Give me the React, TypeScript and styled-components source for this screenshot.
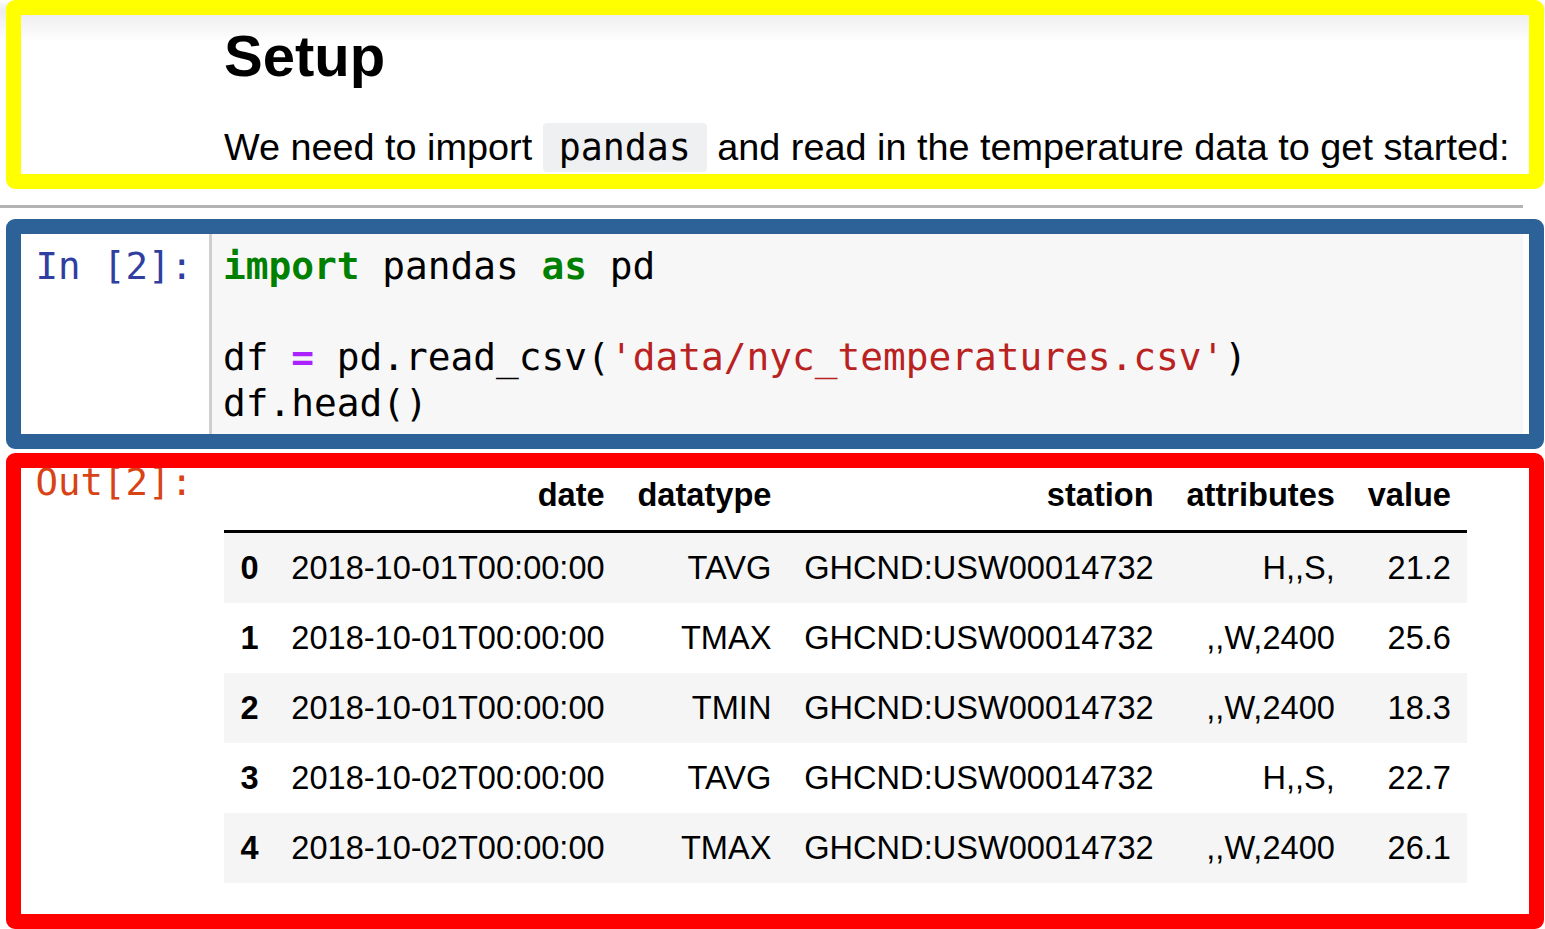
import React from "react";
import styled, { createGlobalStyle } from "styled-components";

const GlobalStyle = createGlobalStyle`
  html, body {
    margin: 0;
    padding: 0;
    background: #ffffff;
  }
  body {
    font-family: "Liberation Sans", Arial, sans-serif;
    color: #000;
  }
`;

const MONO = `"DejaVu Sans Mono", "Liberation Mono", monospace`;

const Page = styled.main`
  width: 1545px;
  height: 929px;
  overflow: hidden;
  background: linear-gradient(to bottom, #ffffff 0px, #ececec 10px, #ffffff 42px) no-repeat;
  background-size: 100% 42px;
`;

const Frame = styled.section<{ $color: string }>`
  box-sizing: border-box;
  margin-left: 6px;
  width: 1538px;
  border: 15px solid ${(p) => p.$color};
  border-radius: 9px;
`;

const MarkdownFrame = styled(Frame)`
  height: 189px;
  padding: 12px 0 0 203px;
  overflow: hidden;
`;

const Heading = styled.h2`
  margin: 0;
  font-size: 58px;
  line-height: 58px;
  font-weight: bold;
`;

const Paragraph = styled.p`
  margin: 38px 0 0 0;
  font-size: 37.8px;
  line-height: 48px;
  white-space: nowrap;
`;

const InlineCode = styled.code`
  font-family: ${MONO};
  font-size: 36.6px;
  background: #eff0f1;
  padding: 3px 16px;
  border-radius: 4px;
`;

const Divider = styled.hr`
  margin: 16px 0 11px 0;
  width: 1523px;
  height: 3px;
  border: none;
  background: #b3b3b3;
`;

const CodeFrame = styled(Frame)`
  height: 230px;
  display: flex;
  overflow: hidden;
`;

const Prompt = styled.div<{ $color: string }>`
  box-sizing: border-box;
  width: 188px;
  flex: none;
  padding: 10px 16px 0 0;
  text-align: right;
  font-family: ${MONO};
  font-size: 37.4px;
  line-height: 45.4px;
  color: ${(p) => p.$color};
  white-space: pre;
`;

const InputArea = styled.div`
  flex: none;
  width: 1314px;
  background: #f7f7f7;
  border-left: 3px solid #cfcfcf;
  padding: 10px 0 8px 11px;
  box-sizing: border-box;
`;

const Code = styled.pre`
  margin: 0;
  font-family: ${MONO};
  font-size: 37.8px;
  line-height: 45.6px;
  color: #000;
`;

const Tok = styled.span<{ $kind: "kw" | "op" | "str" }>`
  color: ${(p) => (p.$kind === "kw" ? "#008000" : p.$kind === "op" ? "#aa22ff" : "#ba2121")};
  font-weight: ${(p) => (p.$kind === "str" ? "normal" : "bold")};
`;

const OutputFrame = styled(Frame)`
  height: 476px;
  margin-top: 4px;
  overflow: hidden;
`;

const OutputRow = styled.div`
  display: flex;
  align-items: flex-start;
  margin-top: -8px;
`;

const OutputPrompt = styled(Prompt)`
  padding-top: 0;
`;

const Table = styled.table`
  margin-left: 15px;
  border-collapse: collapse;
  border-spacing: 0;
  font-family: "Liberation Sans", Arial, sans-serif;
  font-size: 32.6px;
  color: #000;

  thead {
    border-bottom: 3px solid #000;
  }
  tbody tr:nth-child(odd) {
    background: #f5f5f5;
  }
`;

const Th = styled.th`
  height: 70px;
  padding: 0 16.4px;
  text-align: right;
  vertical-align: middle;
  font-weight: bold;
  white-space: nowrap;
`;

const Td = styled.td`
  height: 70px;
  padding: 0 16.4px;
  text-align: right;
  vertical-align: middle;
  white-space: nowrap;
`;

const columns = ["date", "datatype", "station", "attributes", "value"];

const rows = [
  ["2018-10-01T00:00:00", "TAVG", "GHCND:USW00014732", "H,,S,", "21.2"],
  ["2018-10-01T00:00:00", "TMAX", "GHCND:USW00014732", ",,W,2400", "25.6"],
  ["2018-10-01T00:00:00", "TMIN", "GHCND:USW00014732", ",,W,2400", "18.3"],
  ["2018-10-02T00:00:00", "TAVG", "GHCND:USW00014732", "H,,S,", "22.7"],
  ["2018-10-02T00:00:00", "TMAX", "GHCND:USW00014732", ",,W,2400", "26.1"],
];

export default function App() {
  return (
    <Page>
      <GlobalStyle />
      <MarkdownFrame $color="#ffff00">
        <Heading>Setup</Heading>
        <Paragraph>
          We need to import <InlineCode>pandas</InlineCode> and read in the temperature data to get started:
        </Paragraph>
      </MarkdownFrame>

      <Divider />

      <CodeFrame $color="#2d6299">
        <Prompt $color="#303f9f">In [2]:</Prompt>
        <InputArea>
          <Code>
            <Tok $kind="kw">import</Tok> pandas <Tok $kind="kw">as</Tok> pd{"\n"}
            {"\n"}
            df <Tok $kind="op">=</Tok> pd.read_csv(<Tok $kind="str">'data/nyc_temperatures.csv'</Tok>){"\n"}
            df.head()
          </Code>
        </InputArea>
      </CodeFrame>

      <OutputFrame $color="#ff0000">
        <OutputRow>
          <OutputPrompt $color="#d84315">Out[2]:</OutputPrompt>
          <Table>
            <thead>
              <tr>
                <Th />
                {columns.map((c) => (
                  <Th key={c}>{c}</Th>
                ))}
              </tr>
            </thead>
            <tbody>
              {rows.map((r, i) => (
                <tr key={i}>
                  <Th>{i}</Th>
                  {r.map((v, j) => (
                    <Td key={j}>{v}</Td>
                  ))}
                </tr>
              ))}
            </tbody>
          </Table>
        </OutputRow>
      </OutputFrame>
    </Page>
  );
}
